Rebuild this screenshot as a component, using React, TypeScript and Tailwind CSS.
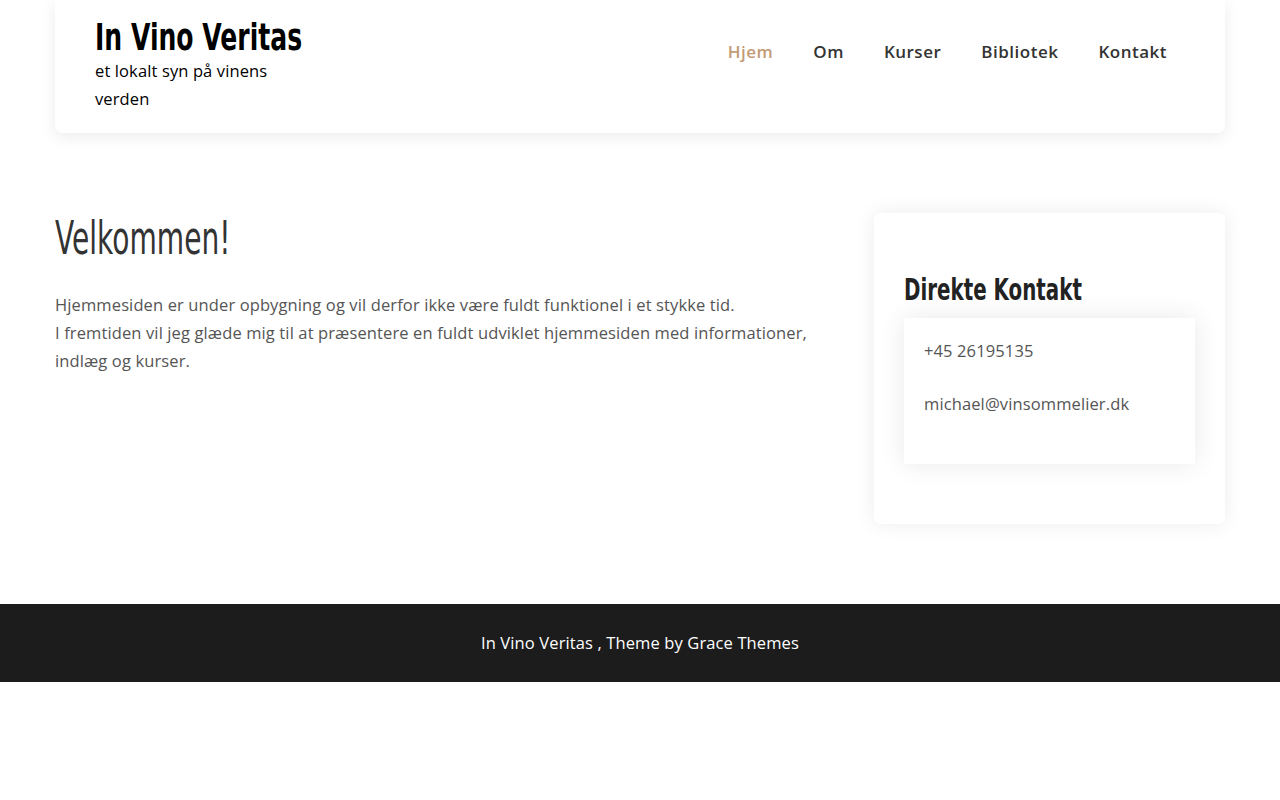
// Headings are squeezed horizontally to get a narrow display face look
const heading = "font-['DejaVu_Sans',sans-serif] origin-left whitespace-nowrap"
const sans = "font-['Open_Sans','Noto_Sans',sans-serif]"
const body = `${sans} tracking-[0.12px]`

const navItems = ["Hjem", "Om", "Kurser", "Bibliotek", "Kontakt"]

function Header() {
  return (
    <header className="mx-[55px] flex h-[133px] items-start justify-between rounded-b-lg bg-white pl-10 pr-[58px] pt-[17px] shadow-[0_4px_16px_rgba(0,0,0,0.08)]">
      <div className="w-[215px]">
        <h1 className={`${heading} scale-x-[0.66] text-[38px] leading-[40px] font-bold text-black`}>
          In Vino Veritas
        </h1>
        <p className={`${body} text-[16.5px] leading-[28px] text-black`}>
          et lokalt syn på vinens verden
        </p>
      </div>
      <nav className="mt-[23px] flex gap-10">
        {navItems.map((item, i) => (
          <a
            key={item}
            href="#"
            className={`${sans} text-[17px] leading-[24px] font-semibold tracking-[0.5px] ${
              i === 0 ? "text-[#c19b76]" : "text-[#333]"
            }`}
          >
            {item}
          </a>
        ))}
      </nav>
    </header>
  )
}

function Sidebar() {
  return (
    <aside className="w-[351px] shrink-0 rounded-md bg-white px-[30px] pt-[56px] pb-[60px] shadow-[0_0_20px_rgba(0,0,0,0.08)]">
      <h3 className={`${heading} scale-x-[0.64] text-[31px] leading-[40px] font-bold text-[#222]`}>
        Direkte Kontakt
      </h3>
      <div className="mt-[9px] bg-white px-5 pt-[19px] pb-[46px] shadow-[0_0_25px_rgba(0,0,0,0.09)]">
        <p className={`${body} text-[16.5px] leading-[28px] text-[#555]`}>+45 26195135</p>
        <p className={`${body} mt-[25px] text-[16.5px] leading-[28px] text-[#555]`}>
          michael@vinsommelier.dk
        </p>
      </div>
    </aside>
  )
}

export default function App() {
  return (
    <div className="min-h-[800px] bg-white">
      <Header />

      <main className="mx-[55px] mt-[80px] flex justify-between gap-[59px]">
        <section className="flex-1">
          <h2 className={`${heading} scale-x-[0.61] text-[46px] leading-[50px] font-normal text-[#333]`}>
            Velkommen!
          </h2>
          <p className={`${body} mt-[28px] text-[16.5px] leading-[28px] text-[#555]`}>
            Hjemmesiden er under opbygning og vil derfor ikke være fuldt funktionel i et stykke tid.
            <br />
            I fremtiden vil jeg glæde mig til at præsentere en fuldt udviklet hjemmesiden med
            informationer, indlæg og kurser.
          </p>
        </section>
        <Sidebar />
      </main>

      <footer className="mt-[80px] bg-[#1c1c1c] py-[25px] text-center">
        <p className={`${body} text-[16.5px] leading-[28px] text-white`}>
          In Vino Veritas , Theme by Grace Themes
        </p>
      </footer>
    </div>
  )
}
